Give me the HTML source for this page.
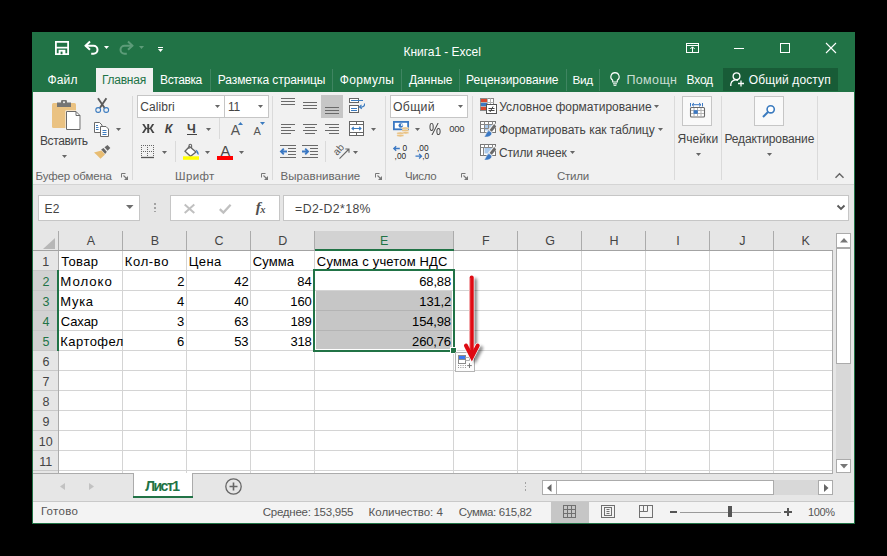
<!DOCTYPE html>
<html><head><meta charset="utf-8"><title>Excel</title>
<style>
html,body{margin:0;padding:0;background:#000;}
body{width:887px;height:556px;position:relative;overflow:hidden;font-family:"Liberation Sans",sans-serif;}
body>div,body>span,body>svg{position:absolute;}
span{white-space:nowrap;line-height:1;}
svg{overflow:visible;}
</style></head><body>
<div style="left:32px;top:32px;width:823px;height:492px;background:#e6e6e6;"></div>
<div style="left:32px;top:32px;width:823px;height:60px;background:#217346;"></div>
<div style="left:32px;top:91px;width:1px;height:433px;background:#217346;"></div>
<div style="left:854px;top:91px;width:1px;height:433px;background:#217346;"></div>
<div style="left:32px;top:523px;width:823px;height:1px;background:#217346;"></div>
<svg style="left:55px;top:41px" width="14" height="14" viewBox="0 0 14 14"><path d="M0.9 0.9H13.1V13.1H0.9Z" fill="none" stroke="#fff" stroke-width="1.8"/><rect x="1" y="5.8" width="12" height="1.7" fill="#fff"/><rect x="3.6" y="8.8" width="6.8" height="4.4" fill="#fff"/><rect x="5.6" y="10.6" width="1.9" height="2.6" fill="#217346"/></svg>
<svg style="left:84px;top:41px" width="15" height="14" viewBox="0 0 15 14"><path d="M1.5 4.7H9.5A4 4 0 0 1 9.5 12.7H7.2" fill="none" stroke="#fff" stroke-width="2"/><path d="M6 0.6L1.6 4.7L6 8.8" fill="none" stroke="#fff" stroke-width="2"/></svg>
<svg style="left:104.0px;top:45.7px" width="5" height="3" viewBox="0 0 5 3"><path d="M0 0H5L2.5 3Z" fill="#fff"/></svg>
<svg style="left:119px;top:41px" width="15" height="14" viewBox="0 0 15 14"><path d="M13.5 4.7H5.5A4 4 0 0 0 5.5 12.7H7.8" fill="none" stroke="#5d9c79" stroke-width="2"/><path d="M9 0.6L13.4 4.7L9 8.8" fill="none" stroke="#5d9c79" stroke-width="2"/></svg>
<svg style="left:139.0px;top:45.7px" width="5" height="3" viewBox="0 0 5 3"><path d="M0 0H5L2.5 3Z" fill="#5d9c79"/></svg>
<div style="left:158px;top:46.5px;width:5px;height:1px;background:#fff;"></div>
<svg style="left:158.0px;top:49.0px" width="5" height="3" viewBox="0 0 5 3"><path d="M0 0H5L2.5 3Z" fill="#fff"/></svg>
<span style="left:403.54px;top:46px;font-size:12px;color:#fff;letter-spacing:-0.040px;">Книга1 - Excel</span>
<svg style="left:686px;top:43px" width="13" height="10" viewBox="0 0 13 10"><rect x="0.5" y="0.5" width="12" height="9" fill="none" stroke="#fff"/><path d="M0.5 2.5H12.5M6.5 9.5V4M4.3 6L6.5 3.8L8.7 6" fill="none" stroke="#fff"/></svg>
<div style="left:734px;top:48px;width:10px;height:1px;background:#fff;"></div>
<svg style="left:780px;top:43px" width="10" height="10" viewBox="0 0 10 10"><rect x="0.5" y="0.5" width="9" height="9" fill="none" stroke="#fff"/></svg>
<svg style="left:826px;top:43px" width="10" height="10" viewBox="0 0 10 10"><path d="M0 0L10 10M10 0L0 10" stroke="#fff" stroke-width="1.1"/></svg>
<div style="left:96px;top:68px;width:57px;height:25px;background:#f1f1f1;"></div>
<span style="left:47.54px;top:74px;font-size:12px;color:#fff;letter-spacing:0.127px;">Файл</span>
<span style="left:101.94px;top:74px;font-size:12px;color:#217346;letter-spacing:-0.237px;">Главная</span>
<span style="left:160.04px;top:74px;font-size:12px;color:#fff;letter-spacing:-0.403px;">Вставка</span>
<span style="left:217.74px;top:74px;font-size:12px;color:#fff;letter-spacing:-0.069px;">Разметка страницы</span>
<span style="left:339.84px;top:74px;font-size:12px;color:#fff;letter-spacing:0.323px;">Формулы</span>
<span style="left:408.94px;top:74px;font-size:12px;color:#fff;letter-spacing:0.036px;">Данные</span>
<span style="left:466.04px;top:74px;font-size:12px;color:#fff;letter-spacing:-0.011px;">Рецензирование</span>
<span style="left:572.56px;top:74px;font-size:11.75px;color:#fff;letter-spacing:-0.396px;">Вид</span>
<span style="left:626.40px;top:74px;font-size:12.5px;color:#cbded3;letter-spacing:0.378px;">Помощн</span>
<span style="left:686.54px;top:74px;font-size:12px;color:#fff;letter-spacing:-0.193px;">Вход</span>
<div style="left:210px;top:69px;width:1px;height:22px;background:#3f8561;"></div>
<div style="left:332px;top:69px;width:1px;height:22px;background:#3f8561;"></div>
<div style="left:401px;top:69px;width:1px;height:22px;background:#3f8561;"></div>
<div style="left:459px;top:69px;width:1px;height:22px;background:#3f8561;"></div>
<div style="left:566px;top:69px;width:1px;height:22px;background:#3f8561;"></div>
<div style="left:599px;top:69px;width:1px;height:22px;background:#3f8561;"></div>
<svg style="left:610px;top:72px" width="10" height="14" viewBox="0 0 10 14"><path d="M5 0.6A4.2 4.2 0 0 1 7.3 8.3V10H2.7V8.3A4.2 4.2 0 0 1 5 0.6Z" fill="none" stroke="#fff" stroke-width="1.1"/><path d="M3 11.8H7M3.6 13.3H6.4" stroke="#fff" stroke-width="1"/></svg>
<div style="left:723px;top:68px;width:115px;height:23px;background:#185c37;"></div>
<svg style="left:730px;top:72px" width="15" height="15" viewBox="0 0 15 15"><circle cx="6.5" cy="4.2" r="3.4" fill="none" stroke="#fff" stroke-width="1.3"/><path d="M0.8 14V12A5 5 0 0 1 8 8.5" fill="none" stroke="#fff" stroke-width="1.3"/><path d="M11 8.5V14.5M8 11.5H14" stroke="#fff" stroke-width="1.3"/></svg>
<span style="left:748.86px;top:74px;font-size:12px;color:#fff;letter-spacing:0.113px;">Общий доступ</span>
<div style="left:33px;top:92px;width:821px;height:92px;background:#f1f1f1;"></div>
<div style="left:33px;top:184px;width:821px;height:1px;background:#d4d4d4;"></div>
<div style="left:132px;top:96px;width:1px;height:84px;background:#dadada;"></div>
<div style="left:272px;top:96px;width:1px;height:84px;background:#dadada;"></div>
<div style="left:385px;top:96px;width:1px;height:84px;background:#dadada;"></div>
<div style="left:472px;top:96px;width:1px;height:84px;background:#dadada;"></div>
<div style="left:674px;top:96px;width:1px;height:84px;background:#dadada;"></div>
<div style="left:721px;top:96px;width:1px;height:84px;background:#dadada;"></div>
<div style="left:817px;top:96px;width:1px;height:84px;background:#dadada;"></div>
<svg style="left:52px;top:100px" width="29" height="30" viewBox="0 0 29 30"><rect x="0" y="3" width="24" height="25" rx="1.5" fill="#eac282"/><rect x="5" y="2.5" width="14" height="4.5" fill="#757575"/><rect x="9" y="0" width="6" height="4" rx="1.2" fill="#757575"/><circle cx="12" cy="2.3" r="1" fill="#f1f1f1"/><path d="M13.5 10.5H24L28.8 15V30H13.5Z" fill="#fff"/><path d="M14.5 11.5H24L28 15.5V29.5H14.5Z" fill="#fff" stroke="#6a6a6a" stroke-width="1"/><path d="M24 11.5V15.5H28" fill="none" stroke="#6a6a6a" stroke-width="1"/></svg>
<span style="left:39.94px;top:135px;font-size:12px;color:#444;letter-spacing:-0.391px;">Вставить</span>
<svg style="left:62.0px;top:154.8px" width="5" height="3" viewBox="0 0 5 3"><path d="M0 0H5L2.5 3Z" fill="#666"/></svg>
<svg style="left:95px;top:98px" width="15" height="15" viewBox="0 0 15 15"><path d="M3 0.3L9.6 10M11.4 0.3L4.8 10" stroke="#5a5a5a" stroke-width="1.9" fill="none"/><circle cx="3.2" cy="12" r="2.4" fill="#f1f1f1" stroke="#3b7bbf" stroke-width="1.1"/><circle cx="11.2" cy="12" r="2.4" fill="#f1f1f1" stroke="#3b7bbf" stroke-width="1.1"/></svg>
<svg style="left:94px;top:122px" width="16" height="15" viewBox="0 0 16 15"><path d="M0.5 0.5H5.5L8 3V10.5H0.5Z" fill="#fff" stroke="#6a6a6a"/><path d="M6.5 4.5H12L14.5 7V14.5H6.5Z" fill="#fff" stroke="#6a6a6a"/><path d="M8.5 8.5H12.5M8.5 10.5H12.5M8.5 12.5H12.5" stroke="#3b7bbf" stroke-width="1"/><path d="M2 3.5H4M2 5.5H4.5M2 7.5H4.5" stroke="#3b7bbf" stroke-width="1"/></svg>
<svg style="left:116.1px;top:128.0px" width="5" height="3" viewBox="0 0 5 3"><path d="M0 0H5L2.5 3Z" fill="#666"/></svg>
<svg style="left:94px;top:145px" width="17" height="14" viewBox="0 0 17 14"><path d="M0 7.5L7.5 5.5L11 9.5L6.5 13.8Q3 10 0 7.5Z" fill="#e8bd73"/><path d="M7.2 4.6L9.5 3L12.8 6.8L11.2 9Z" fill="#666"/><path d="M10.5 2.3L13.5 0L16.3 3L13.6 5.8Z" fill="#666"/></svg>
<span style="left:35.58px;top:171px;font-size:11.5px;color:#666;letter-spacing:-0.157px;">Буфер обмена</span>
<svg style="left:121px;top:172.5px" width="7" height="7" viewBox="0 0 7 7"><path d="M0.5 4.5V0.5H4.5" fill="none" stroke="#777" stroke-width="1"/><path d="M2.5 2.5L5.5 5.5" stroke="#777" stroke-width="1.1"/><path d="M7 3V7H3Z" fill="#777"/></svg>
<div style="left:137px;top:95px;width:88px;height:23px;background:#fff;border:1px solid #c6c6c6;box-sizing:border-box;"></div>
<div style="left:224px;top:95px;width:45px;height:23px;background:#fff;border:1px solid #c6c6c6;box-sizing:border-box;"></div>
<span style="left:140.20px;top:101px;font-size:12px;color:#444;letter-spacing:0.070px;">Calibri</span>
<svg style="left:215.0px;top:104.8px" width="5" height="3" viewBox="0 0 5 3"><path d="M0 0H5L2.5 3Z" fill="#666"/></svg>
<span style="left:228.10px;top:101px;font-size:12.0px;color:#444;letter-spacing:-0.480px;">11</span>
<svg style="left:257.8px;top:104.8px" width="5" height="3" viewBox="0 0 5 3"><path d="M0 0H5L2.5 3Z" fill="#666"/></svg>
<span style="left:141.70px;top:123px;font-size:12.5px;color:#444;font-weight:bold;transform:scaleX(1.1);transform-origin:0 0;">Ж</span>
<span style="left:164.75px;top:123px;font-size:12.5px;color:#444;font-weight:bold;font-style:italic;">К</span>
<span style="left:186.91px;top:123px;font-size:12.5px;color:#444;font-weight:bold;">Ч</span>
<div style="left:187.2px;top:134px;width:10px;height:1.2px;background:#444;"></div>
<svg style="left:206.0px;top:127.80000000000001px" width="5" height="3" viewBox="0 0 5 3"><path d="M0 0H5L2.5 3Z" fill="#666"/></svg>
<div style="left:219px;top:118px;width:1px;height:21px;background:#dadada;"></div>
<span style="left:230.70px;top:123px;font-size:14px;color:#555;">A</span>
<svg style="left:238px;top:122px" width="5" height="3" viewBox="0 0 5 3"><path d="M0 3H5L2.5 0Z" fill="#3b7bbf"/></svg>
<span style="left:253.60px;top:126px;font-size:11px;color:#555;">A</span>
<svg style="left:260.3px;top:122px" width="5" height="3" viewBox="0 0 5 3"><path d="M0 0H5L2.5 3Z" fill="#3b7bbf"/></svg>
<svg style="left:141px;top:145px" width="13" height="13" viewBox="0 0 13 13"><path d="M0 0.5H13M0 6.5H13M0.5 0V12M6.5 0V12M12.5 0V12" stroke="#666" stroke-width="1" stroke-dasharray="1 1" fill="none" shape-rendering="crispEdges"/><path d="M0 12.5H13" stroke="#555" stroke-width="1.3"/></svg>
<svg style="left:161.8px;top:150.8px" width="5" height="3" viewBox="0 0 5 3"><path d="M0 0H5L2.5 3Z" fill="#666"/></svg>
<div style="left:175px;top:141px;width:1px;height:21px;background:#dadada;"></div>
<svg style="left:183px;top:144px" width="17" height="16" viewBox="0 0 17 16"><path d="M6.5 2.5L13 8L7.5 12.3L2 7.2Z" fill="#fff" stroke="#666" stroke-width="1.3"/><path d="M6 5V1.5A1.3 1.3 0 0 1 8.6 1.5V4" fill="none" stroke="#666" stroke-width="1.1"/><path d="M12.6 5.5C15 6.5 16.2 9 15.5 11C14 10.5 13.8 8 12.6 5.5Z" fill="#3b7bbf"/><rect x="0" y="12.3" width="16" height="3.5" fill="#ffff00"/></svg>
<svg style="left:205.1px;top:150.8px" width="5" height="3" viewBox="0 0 5 3"><path d="M0 0H5L2.5 3Z" fill="#666"/></svg>
<span style="left:220.50px;top:144px;font-size:14.5px;color:#484848;">A</span>
<div style="left:217px;top:156.3px;width:16px;height:3.5px;background:#ff0000;"></div>
<svg style="left:239.0px;top:150.8px" width="5" height="3" viewBox="0 0 5 3"><path d="M0 0H5L2.5 3Z" fill="#666"/></svg>
<span style="left:175.08px;top:171px;font-size:11.5px;color:#666;letter-spacing:0.329px;">Шрифт</span>
<svg style="left:261px;top:172.5px" width="7" height="7" viewBox="0 0 7 7"><path d="M0.5 4.5V0.5H4.5" fill="none" stroke="#777" stroke-width="1"/><path d="M2.5 2.5L5.5 5.5" stroke="#777" stroke-width="1.1"/><path d="M7 3V7H3Z" fill="#777"/></svg>
<div style="left:281px;top:98px;width:14px;height:1px;background:#6a6a6a;"></div>
<div style="left:281px;top:101px;width:14px;height:1px;background:#6a6a6a;"></div>
<div style="left:281px;top:104px;width:14px;height:1px;background:#6a6a6a;"></div>
<div style="left:303px;top:102px;width:14px;height:1px;background:#6a6a6a;"></div>
<div style="left:303px;top:105px;width:14px;height:1px;background:#6a6a6a;"></div>
<div style="left:303px;top:108px;width:14px;height:1px;background:#6a6a6a;"></div>
<div style="left:321px;top:95px;width:22px;height:23px;background:#c6c6c6;"></div>
<div style="left:325px;top:107px;width:14px;height:1px;background:#6a6a6a;"></div>
<div style="left:325px;top:110px;width:14px;height:1px;background:#6a6a6a;"></div>
<div style="left:325px;top:113px;width:14px;height:1px;background:#6a6a6a;"></div>
<svg style="left:349px;top:98px" width="17" height="15" viewBox="0 0 17 15"><rect x="0.5" y="0.5" width="9" height="4" fill="#fff" stroke="#666"/><path d="M2 2.5H14" stroke="#3b7bbf"/><rect x="0.5" y="7.5" width="9" height="7" fill="#fff" stroke="#666"/><path d="M2 10.5H8M2 12.5H8" stroke="#3b7bbf"/><path d="M15.5 5.5C16 8.5 13.5 9.5 10.5 9M12.5 6.8L10.3 9L12.8 10.8" fill="none" stroke="#3b7bbf" stroke-width="1.1"/></svg>
<div style="left:281px;top:124px;width:14px;height:1px;background:#6a6a6a;"></div>
<div style="left:303.0px;top:124px;width:14px;height:1px;background:#6a6a6a;"></div>
<div style="left:325px;top:124px;width:14px;height:1px;background:#6a6a6a;"></div>
<div style="left:281px;top:127px;width:10px;height:1px;background:#6a6a6a;"></div>
<div style="left:305.0px;top:127px;width:10px;height:1px;background:#6a6a6a;"></div>
<div style="left:329px;top:127px;width:10px;height:1px;background:#6a6a6a;"></div>
<div style="left:281px;top:130px;width:14px;height:1px;background:#6a6a6a;"></div>
<div style="left:303.0px;top:130px;width:14px;height:1px;background:#6a6a6a;"></div>
<div style="left:325px;top:130px;width:14px;height:1px;background:#6a6a6a;"></div>
<div style="left:281px;top:133px;width:10px;height:1px;background:#6a6a6a;"></div>
<div style="left:305.0px;top:133px;width:10px;height:1px;background:#6a6a6a;"></div>
<div style="left:329px;top:133px;width:10px;height:1px;background:#6a6a6a;"></div>
<svg style="left:349px;top:121px" width="15" height="15" viewBox="0 0 15 15"><rect x="0.5" y="0.5" width="14" height="14" fill="#fff" stroke="#666"/><path d="M0.5 3.5H14.5M0.5 11.5H14.5M7.5 0.5V3.5M7.5 11.5V14.5" stroke="#666" fill="none"/><path d="M3 7.5H12M4.8 5.8L3 7.5L4.8 9.2M10.2 5.8L12 7.5L10.2 9.2" stroke="#3b7bbf" stroke-width="1.1" fill="none"/></svg>
<svg style="left:371.1px;top:128.0px" width="5" height="3" viewBox="0 0 5 3"><path d="M0 0H5L2.5 3Z" fill="#666"/></svg>
<svg style="left:280px;top:145px" width="16" height="13" viewBox="0 0 16 13"><path d="M0 0.5H16M8 3.5H16M8 6.5H16M8 9.5H16M0 12.5H16" stroke="#6a6a6a" fill="none"/><path d="M7 6.5H1M3.8 3.6L0.9 6.5L3.8 9.4" stroke="#3b78c3" stroke-width="1.8" fill="none"/></svg>
<svg style="left:302px;top:145px" width="16" height="13" viewBox="0 0 16 13"><path d="M0 0.5H16M8 3.5H16M8 6.5H16M8 9.5H16M0 12.5H16" stroke="#6a6a6a" fill="none"/><path d="M0 6.5H6M3.2 3.6L6.1 6.5L3.2 9.4" stroke="#3b78c3" stroke-width="1.8" fill="none"/></svg>
<div style="left:325px;top:141px;width:1px;height:21px;background:#dadada;"></div>
<svg style="left:333px;top:144px" width="17" height="16" viewBox="0 0 17 16"><text x="0" y="0" font-size="10" fill="#555" transform="translate(4.3,12) rotate(-48)" font-family="Liberation Sans">ab</text><path d="M6.5 14.7L15.5 5.5M12.3 5H16V8.7" stroke="#666" stroke-width="1.1" fill="none"/></svg>
<svg style="left:353.0px;top:150.8px" width="5" height="3" viewBox="0 0 5 3"><path d="M0 0H5L2.5 3Z" fill="#666"/></svg>
<span style="left:280.58px;top:171px;font-size:11.5px;color:#666;letter-spacing:0.047px;">Выравнивание</span>
<svg style="left:374.5px;top:172.5px" width="7" height="7" viewBox="0 0 7 7"><path d="M0.5 4.5V0.5H4.5" fill="none" stroke="#777" stroke-width="1"/><path d="M2.5 2.5L5.5 5.5" stroke="#777" stroke-width="1.1"/><path d="M7 3V7H3Z" fill="#777"/></svg>
<div style="left:390px;top:95px;width:78px;height:23px;background:#fff;border:1px solid #c6c6c6;box-sizing:border-box;"></div>
<span style="left:392.95px;top:101px;font-size:12.25px;color:#444;letter-spacing:0.352px;">Общий</span>
<svg style="left:457.8px;top:104.8px" width="5" height="3" viewBox="0 0 5 3"><path d="M0 0H5L2.5 3Z" fill="#666"/></svg>
<svg style="left:393px;top:121px" width="16" height="16" viewBox="0 0 16 16"><rect x="0.9" y="0.9" width="14.2" height="7.4" fill="#fff" stroke="#3b78c3" stroke-width="1.8"/><circle cx="7.8" cy="4.5" r="2.3" fill="#3b78c3"/><circle cx="8.8" cy="4" r="0.9" fill="#fff"/><ellipse cx="12.3" cy="7.3" rx="3.6" ry="1.3" fill="#eac282" stroke="#f1f1f1" stroke-width="0.5"/><ellipse cx="12.3" cy="9.5" rx="3.6" ry="1.3" fill="#eac282" stroke="#f1f1f1" stroke-width="0.5"/><ellipse cx="12.3" cy="11.7" rx="3.6" ry="1.3" fill="#eac282" stroke="#f1f1f1" stroke-width="0.5"/><ellipse cx="7.3" cy="12.3" rx="3.6" ry="1.3" fill="#eac282" stroke="#f1f1f1" stroke-width="0.5"/><ellipse cx="7.3" cy="14.6" rx="3.6" ry="1.3" fill="#eac282" stroke="#f1f1f1" stroke-width="0.5"/></svg>
<svg style="left:414.9px;top:128.0px" width="5" height="3" viewBox="0 0 5 3"><path d="M0 0H5L2.5 3Z" fill="#666"/></svg>
<span style="left:429.14px;top:122px;font-size:16px;color:#444;transform:scaleX(0.85);transform-origin:0 0;">%</span>
<span style="left:449.32px;top:124px;font-size:9.5px;color:#3a3a3a;letter-spacing:-0.302px;">000</span>
<svg style="left:393px;top:145px" width="16" height="14" viewBox="0 0 16 14"><path d="M6.8 3.5H0.8M3.2 1.2L0.8 3.5L3.2 5.8" stroke="#3b78c3" stroke-width="1.3" fill="none"/><text x="9.5" y="5.6" font-size="8.3" fill="#2a2a2a" font-family="Liberation Sans">0</text><text x="1.6" y="13.9" font-size="8.3" fill="#2a2a2a" font-family="Liberation Sans">,00</text></svg>
<svg style="left:414.5px;top:145px" width="16" height="14" viewBox="0 0 16 14"><text x="2" y="5.6" font-size="8.3" fill="#2a2a2a" font-family="Liberation Sans">,00</text><path d="M0.5 11.2H6.5M4.1 8.9L6.5 11.2L4.1 13.5" stroke="#3b78c3" stroke-width="1.3" fill="none"/><text x="7.2" y="13.9" font-size="8.3" fill="#2a2a2a" font-family="Liberation Sans">,0</text></svg>
<span style="left:404.88px;top:171px;font-size:11.5px;color:#666;letter-spacing:-0.296px;">Число</span>
<svg style="left:461px;top:172.5px" width="7" height="7" viewBox="0 0 7 7"><path d="M0.5 4.5V0.5H4.5" fill="none" stroke="#777" stroke-width="1"/><path d="M2.5 2.5L5.5 5.5" stroke="#777" stroke-width="1.1"/><path d="M7 3V7H3Z" fill="#777"/></svg>
<svg style="left:480px;top:98px" width="17" height="16" viewBox="0 0 17 16"><rect x="0.5" y="0.5" width="13" height="12" fill="#fff" stroke="#8a8a8a"/><path d="M7.5 0.5V12M10.5 0.5V6M0.5 4.5H13.5M0.5 8.5H8" stroke="#b5b5b5" fill="none"/><rect x="1" y="1" width="6" height="3" fill="#d8492f"/><rect x="1" y="5" width="6" height="3" fill="#3b78c3"/><rect x="1" y="9" width="6" height="3" fill="#d8492f"/><rect x="6.5" y="6.5" width="10" height="9" fill="#fff" stroke="#555"/><path d="M8.5 10.5H14.5M8.5 12.5H14.5M13 8.5L10 14" stroke="#444" stroke-width="1"/></svg>
<span style="left:499.24px;top:101px;font-size:12px;color:#444;letter-spacing:-0.015px;">Условное форматирование</span>
<svg style="left:654.0px;top:104.8px" width="5" height="3" viewBox="0 0 5 3"><path d="M0 0H5L2.5 3Z" fill="#666"/></svg>
<svg style="left:480px;top:121px" width="17" height="17" viewBox="0 0 17 17"><rect x="0.5" y="0.5" width="15" height="11" fill="#fff" stroke="#777"/><rect x="4.5" y="3.5" width="8" height="6" fill="#abc9ea"/><path d="M0.5 3.5H15.5M0.5 7.5H10M0.5 11.5H7M4.5 0.5V11.5M8.5 0.5V10M12.5 0.5V5" stroke="#888" fill="none"/><path d="M8 8.5L14.5 1.5L17 4.5L11.5 12.5Z" fill="#f1f1f1"/><path d="M14.2 3L16.2 5.5L11.8 10.8L9.6 9Z" fill="#6a6a6a"/><path d="M9 9.6L11.6 11.6C12.5 14.5 8.5 16.8 4 15.9C6.2 14.5 6 10.6 9 9.6Z" fill="#3b78c3" stroke="#f1f1f1" stroke-width="0.6"/></svg>
<span style="left:498.94px;top:124px;font-size:12px;color:#444;letter-spacing:-0.015px;">Форматировать как таблицу</span>
<svg style="left:658.1px;top:128.0px" width="5" height="3" viewBox="0 0 5 3"><path d="M0 0H5L2.5 3Z" fill="#666"/></svg>
<svg style="left:480px;top:144px" width="17" height="17" viewBox="0 0 17 17"><rect x="0.5" y="0.5" width="15" height="11" fill="#fff" stroke="#777"/><rect x="4.5" y="3.5" width="8" height="6" fill="#abc9ea"/><path d="M0.5 3.5H15.5M4.5 0.5V3.5M8.5 0.5V3.5M12.5 0.5V3.5M3.5 3.5V11.5" stroke="#888" fill="none"/><path d="M8 8.5L14.5 1.5L17 4.5L11.5 12.5Z" fill="#f1f1f1"/><path d="M14.2 3L16.2 5.5L11.8 10.8L9.6 9Z" fill="#6a6a6a"/><path d="M9 9.6L11.6 11.6C12.5 14.5 8.5 16.8 4 15.9C6.2 14.5 6 10.6 9 9.6Z" fill="#3b78c3" stroke="#f1f1f1" stroke-width="0.6"/></svg>
<span style="left:499.00px;top:147px;font-size:12px;color:#444;letter-spacing:-0.160px;">Стили ячеек</span>
<svg style="left:569.8px;top:150.8px" width="5" height="3" viewBox="0 0 5 3"><path d="M0 0H5L2.5 3Z" fill="#666"/></svg>
<span style="left:557.02px;top:171px;font-size:11.5px;color:#666;letter-spacing:-0.235px;">Стили</span>
<div style="left:682px;top:96px;width:30px;height:30px;background:#f9f9f9;border:1px solid #c6c6c6;box-sizing:border-box;"></div>
<svg style="left:690px;top:102px" width="15" height="16" viewBox="0 0 15 16"><path d="M0.5 1V4.5M12.5 1V4.5M2 2.7H11M4 1L2 2.7L4 4.4M9 1L11 2.7L9 4.4" stroke="#3b78c3" fill="none"/><rect x="0.5" y="5.5" width="14" height="9.5" rx="1" fill="#fff" stroke="#686868" stroke-width="1.1"/><path d="M1 8.5H14M1 11.5H14M4 6V14.5M7.5 6V14.5M11 6V14.5" stroke="#b4b4b4" fill="none"/><rect x="3.6" y="8.2" width="4.2" height="3.6" fill="#3b78c3"/></svg>
<span style="left:677.40px;top:133px;font-size:12px;color:#444;letter-spacing:0.096px;">Ячейки</span>
<svg style="left:695.9px;top:153.0px" width="5" height="3" viewBox="0 0 5 3"><path d="M0 0H5L2.5 3Z" fill="#666"/></svg>
<div style="left:754px;top:96px;width:30px;height:30px;background:#f9f9f9;border:1px solid #c6c6c6;box-sizing:border-box;"></div>
<svg style="left:762px;top:104px" width="14" height="14" viewBox="0 0 14 14"><circle cx="8.7" cy="5.3" r="3.6" fill="#fff" stroke="#3b7bbf" stroke-width="1.6"/><path d="M6 8L1 13" stroke="#3b7bbf" stroke-width="2"/></svg>
<span style="left:724.44px;top:133px;font-size:12px;color:#444;letter-spacing:-0.114px;">Редактирование</span>
<svg style="left:766.7px;top:153.0px" width="5" height="3" viewBox="0 0 5 3"><path d="M0 0H5L2.5 3Z" fill="#666"/></svg>
<svg style="left:835px;top:173px" width="9" height="5" viewBox="0 0 9 5"><path d="M0.5 4.7L4.5 0.8L8.5 4.7" fill="none" stroke="#666" stroke-width="1.5"/></svg>
<div style="left:38px;top:195px;width:102px;height:26px;background:#fff;border:1px solid #c6c6c6;box-sizing:border-box;"></div>
<span style="left:44.54px;top:203px;font-size:12px;color:#444;letter-spacing:0.120px;">E2</span>
<svg style="left:125.65px;top:205.2px" width="7.5" height="4" viewBox="0 0 7.5 4"><path d="M0 0H7.5L3.75 4Z" fill="#6e6e6e"/></svg>
<div style="left:154px;top:203.3px;width:1.8px;height:1.8px;background:#a2a2a2;"></div>
<div style="left:154px;top:207px;width:1.8px;height:1.8px;background:#a2a2a2;"></div>
<div style="left:154px;top:210.7px;width:1.8px;height:1.8px;background:#a2a2a2;"></div>
<div style="left:170px;top:195px;width:110px;height:26px;background:#fff;border:1px solid #c6c6c6;box-sizing:border-box;"></div>
<svg style="left:183.5px;top:203.5px" width="11" height="9.5" viewBox="0 0 11 9.5"><path d="M0.7 0.5L10.3 9M10.3 0.5L0.7 9" stroke="#c0c0c0" stroke-width="2"/></svg>
<svg style="left:219.4px;top:203.5px" width="12.5" height="9.5" viewBox="0 0 12.5 9.5"><path d="M0.8 5.2L4.4 8.6L11.6 0.8" fill="none" stroke="#c0c0c0" stroke-width="2.3"/></svg>
<span style="left:255.8px;top:199px;font-family:'Liberation Serif',serif;font-style:italic;font-weight:bold;font-size:15.5px;color:#505050;letter-spacing:-0.8px">f<span style="font-size:10.5px;position:relative;top:0.5px;font-weight:bold">x</span></span>
<div style="left:283px;top:195px;width:566px;height:26px;background:#fff;border:1px solid #c6c6c6;box-sizing:border-box;"></div>
<span style="left:295.09px;top:203px;font-size:12.25px;color:#444;letter-spacing:0.399px;">=D2-D2*18%</span>
<svg style="left:837px;top:205px" width="8" height="5" viewBox="0 0 8 5"><path d="M0.5 0.5L4 4L7.5 0.5" fill="none" stroke="#5a5a5a" stroke-width="1.9"/></svg>
<div style="left:59px;top:251px;width:774px;height:222px;background:#fff;"></div>
<div style="left:315px;top:231px;width:139px;height:19px;background:#d2d2d2;"></div>
<div style="left:122px;top:231px;width:1px;height:19px;background:#ababab;"></div>
<div style="left:186px;top:231px;width:1px;height:19px;background:#ababab;"></div>
<div style="left:250px;top:231px;width:1px;height:19px;background:#ababab;"></div>
<div style="left:314px;top:231px;width:1px;height:19px;background:#ababab;"></div>
<div style="left:453px;top:231px;width:1px;height:19px;background:#ababab;"></div>
<div style="left:517px;top:231px;width:1px;height:19px;background:#ababab;"></div>
<div style="left:581px;top:231px;width:1px;height:19px;background:#ababab;"></div>
<div style="left:645px;top:231px;width:1px;height:19px;background:#ababab;"></div>
<div style="left:709px;top:231px;width:1px;height:19px;background:#ababab;"></div>
<div style="left:773px;top:231px;width:1px;height:19px;background:#ababab;"></div>
<div style="left:58px;top:231px;width:1px;height:19px;background:#ababab;"></div>
<div style="left:33px;top:250px;width:800px;height:1px;background:#a3a3a3;"></div>
<div style="left:315px;top:249px;width:139px;height:2px;background:#217346;"></div>
<span style="left:86.84px;top:235px;font-size:12.5px;color:#444;">A</span>
<span style="left:150.66px;top:235px;font-size:12.5px;color:#444;">B</span>
<span style="left:214.41px;top:235px;font-size:12.5px;color:#444;">C</span>
<span style="left:278.28px;top:235px;font-size:12.5px;color:#444;">D</span>
<span style="left:380.09px;top:235px;font-size:12.5px;color:#217346;">E</span>
<span style="left:481.94px;top:235px;font-size:12.5px;color:#444;">F</span>
<span style="left:545.28px;top:235px;font-size:12.5px;color:#444;">G</span>
<span style="left:609.50px;top:235px;font-size:12.5px;color:#444;">H</span>
<span style="left:676.28px;top:235px;font-size:12.5px;color:#444;">I</span>
<span style="left:739.25px;top:235px;font-size:12.5px;color:#444;">J</span>
<span style="left:801.41px;top:235px;font-size:12.5px;color:#444;">K</span>
<svg style="left:43px;top:238px" width="12" height="11" viewBox="0 0 12 11"><path d="M12 0V11H0Z" fill="#b7b7b7"/></svg>
<div style="left:33px;top:271px;width:25px;height:80px;background:#d2d2d2;"></div>
<div style="left:33px;top:270px;width:25px;height:1px;background:#c8c8c8;"></div>
<div style="left:59px;top:270px;width:774px;height:1px;background:#d4d4d4;"></div>
<span style="left:42.34px;top:256px;font-size:12.5px;color:#444;">1</span>
<div style="left:33px;top:290px;width:25px;height:1px;background:#c8c8c8;"></div>
<div style="left:59px;top:290px;width:774px;height:1px;background:#d4d4d4;"></div>
<span style="left:42.53px;top:276px;font-size:12.5px;color:#217346;">2</span>
<div style="left:33px;top:310px;width:25px;height:1px;background:#c8c8c8;"></div>
<div style="left:59px;top:310px;width:774px;height:1px;background:#d4d4d4;"></div>
<span style="left:42.53px;top:296px;font-size:12.5px;color:#217346;">3</span>
<div style="left:33px;top:330px;width:25px;height:1px;background:#c8c8c8;"></div>
<div style="left:59px;top:330px;width:774px;height:1px;background:#d4d4d4;"></div>
<span style="left:42.59px;top:316px;font-size:12.5px;color:#217346;">4</span>
<div style="left:33px;top:350px;width:25px;height:1px;background:#c8c8c8;"></div>
<div style="left:59px;top:350px;width:774px;height:1px;background:#d4d4d4;"></div>
<span style="left:42.53px;top:336px;font-size:12.5px;color:#217346;">5</span>
<div style="left:33px;top:370px;width:25px;height:1px;background:#c8c8c8;"></div>
<div style="left:59px;top:370px;width:774px;height:1px;background:#d4d4d4;"></div>
<span style="left:42.47px;top:356px;font-size:12.5px;color:#444;">6</span>
<div style="left:33px;top:390px;width:25px;height:1px;background:#c8c8c8;"></div>
<div style="left:59px;top:390px;width:774px;height:1px;background:#d4d4d4;"></div>
<span style="left:42.53px;top:376px;font-size:12.5px;color:#444;">7</span>
<div style="left:33px;top:410px;width:25px;height:1px;background:#c8c8c8;"></div>
<div style="left:59px;top:410px;width:774px;height:1px;background:#d4d4d4;"></div>
<span style="left:42.50px;top:396px;font-size:12.5px;color:#444;">8</span>
<div style="left:33px;top:430px;width:25px;height:1px;background:#c8c8c8;"></div>
<div style="left:59px;top:430px;width:774px;height:1px;background:#d4d4d4;"></div>
<span style="left:42.53px;top:416px;font-size:12.5px;color:#444;">9</span>
<div style="left:33px;top:450px;width:25px;height:1px;background:#c8c8c8;"></div>
<div style="left:59px;top:450px;width:774px;height:1px;background:#d4d4d4;"></div>
<span style="left:38.81px;top:436px;font-size:12.5px;color:#444;">10</span>
<div style="left:33px;top:470px;width:25px;height:1px;background:#c8c8c8;"></div>
<div style="left:59px;top:470px;width:774px;height:1px;background:#d4d4d4;"></div>
<span style="left:39.34px;top:456px;font-size:12.5px;color:#444;">11</span>
<div style="left:58px;top:251px;width:1px;height:222px;background:#ababab;"></div>
<div style="left:57px;top:270px;width:2px;height:81px;background:#217346;"></div>
<div style="left:122px;top:251px;width:1px;height:222px;background:#d4d4d4;"></div>
<div style="left:186px;top:251px;width:1px;height:222px;background:#d4d4d4;"></div>
<div style="left:250px;top:251px;width:1px;height:222px;background:#d4d4d4;"></div>
<div style="left:314px;top:251px;width:1px;height:222px;background:#d4d4d4;"></div>
<div style="left:453px;top:251px;width:1px;height:222px;background:#d4d4d4;"></div>
<div style="left:517px;top:251px;width:1px;height:222px;background:#d4d4d4;"></div>
<div style="left:581px;top:251px;width:1px;height:222px;background:#d4d4d4;"></div>
<div style="left:645px;top:251px;width:1px;height:222px;background:#d4d4d4;"></div>
<div style="left:709px;top:251px;width:1px;height:222px;background:#d4d4d4;"></div>
<div style="left:773px;top:251px;width:1px;height:222px;background:#d4d4d4;"></div>
<div style="left:832px;top:251px;width:1px;height:223px;background:#ababab;"></div>
<div style="left:316px;top:291px;width:136px;height:58px;background:#c6c6c6;"></div>
<div style="left:316px;top:310px;width:136px;height:1px;background:#b4b4b4;"></div>
<div style="left:316px;top:330px;width:136px;height:1px;background:#b4b4b4;"></div>
<div style="left:313px;top:269px;width:142px;height:83px;border:2px solid #217346;box-sizing:border-box;"></div>
<div style="left:450px;top:347px;width:7px;height:7px;background:#fff;"></div>
<div style="left:451px;top:348px;width:5px;height:5px;background:#217346;"></div>
<span style="left:61.14px;top:255px;font-size:13px;color:#000;letter-spacing:0.380px;">Товар</span>
<span style="left:124.86px;top:255px;font-size:13px;color:#000;letter-spacing:0.626px;">Кол-во</span>
<span style="left:188.76px;top:255px;font-size:13px;color:#000;letter-spacing:0.392px;">Цена</span>
<span style="left:252.75px;top:255px;font-size:13px;color:#000;letter-spacing:0.082px;">Сумма</span>
<span style="left:316.85px;top:255px;font-size:13px;color:#000;letter-spacing:0.166px;">Сумма с учетом НДС</span>
<span style="left:60.34px;top:275px;font-size:13.25px;color:#000;letter-spacing:0.930px;">Молоко</span>
<span style="left:177.24px;top:275px;font-size:13px;color:#000;letter-spacing:-0.15px;">2</span>
<span style="left:234.37px;top:275px;font-size:13px;color:#000;letter-spacing:-0.15px;">42</span>
<span style="left:297.31px;top:275px;font-size:13px;color:#000;letter-spacing:-0.15px;">84</span>
<span style="left:419.22px;top:275px;font-size:13px;color:#000;letter-spacing:-0.15px;">68,88</span>
<span style="left:60.36px;top:295px;font-size:13px;color:#000;letter-spacing:0.687px;">Мука</span>
<span style="left:176.98px;top:295px;font-size:13px;color:#000;letter-spacing:-0.15px;">4</span>
<span style="left:234.18px;top:295px;font-size:13px;color:#000;letter-spacing:-0.15px;">40</span>
<span style="left:290.31px;top:295px;font-size:13px;color:#000;letter-spacing:-0.15px;">160</span>
<span style="left:419.35px;top:295px;font-size:13px;color:#000;letter-spacing:-0.15px;">131,2</span>
<span style="left:60.75px;top:315px;font-size:13px;color:#000;letter-spacing:-0.075px;">Сахар</span>
<span style="left:177.10px;top:315px;font-size:13px;color:#000;letter-spacing:-0.15px;">3</span>
<span style="left:234.24px;top:315px;font-size:13px;color:#000;letter-spacing:-0.15px;">63</span>
<span style="left:290.44px;top:315px;font-size:13px;color:#000;letter-spacing:-0.15px;">189</span>
<span style="left:412.09px;top:315px;font-size:13px;color:#000;letter-spacing:-0.15px;">154,98</span>
<span style="left:60.36px;top:335px;font-size:13px;color:#000;letter-spacing:0.441px;">Картофел</span>
<span style="left:177.11px;top:335px;font-size:13px;color:#000;letter-spacing:-0.15px;">6</span>
<span style="left:234.24px;top:335px;font-size:13px;color:#000;letter-spacing:-0.15px;">53</span>
<span style="left:290.38px;top:335px;font-size:13px;color:#000;letter-spacing:-0.15px;">318</span>
<span style="left:412.09px;top:335px;font-size:13px;color:#000;letter-spacing:-0.15px;">260,76</span>
<div style="left:836px;top:233px;width:15px;height:15px;background:#fff;border:1px solid #ababab;box-sizing:border-box;"></div>
<svg style="left:839.5px;top:238px" width="8" height="4.5" viewBox="0 0 8 4.5"><path d="M0 4.5H8L4 0Z" fill="#777"/></svg>
<div style="left:836px;top:248px;width:15px;height:211px;background:#d8d8d8;"></div>
<div style="left:836px;top:248px;width:15px;height:116px;background:#fff;border:1px solid #ababab;box-sizing:border-box;"></div>
<div style="left:836px;top:459px;width:15px;height:14px;background:#fff;border:1px solid #ababab;box-sizing:border-box;"></div>
<svg style="left:839.5px;top:464px" width="8" height="4.5" viewBox="0 0 8 4.5"><path d="M0 0H8L4 4.5Z" fill="#777"/></svg>
<div style="left:455px;top:352px;width:20px;height:20px;background:#fcfcfc;border:1px solid #b4b4b4;box-sizing:border-box;"></div>
<svg style="left:458px;top:355px" width="14" height="14" viewBox="0 0 14 14"><rect x="0.5" y="0.5" width="7" height="8" fill="#fff" stroke="#8a8a8a"/><rect x="1" y="1" width="6" height="3" fill="#3b78f0"/><path d="M1 4.5H7" stroke="#8a8a8a"/><path d="M7.5 2.5H11.5V5.5H7.5" stroke="#b0b0b0" fill="none"/><path d="M0 10.5H8M0 12.5H8" stroke="#999" stroke-dasharray="1 1.33"/><path d="M11.5 8.3V13M9.2 10.6H13.8" stroke="#777" stroke-width="1"/></svg>
<svg style="left:460px;top:270px" width="30" height="95" viewBox="0 0 30 95"><defs><filter id="sh" x="-80%" y="-10%" width="300%" height="130%"><feGaussianBlur stdDeviation="1.7"/></filter></defs><g filter="url(#sh)" opacity="0.45" transform="translate(3.3,2.4)"><path d="M11.7 7.6V85" stroke="#000" stroke-width="4.2" stroke-linecap="round" fill="none"/><path d="M6 75.6L11.85 87L17.7 75.6" stroke="#000" stroke-width="4.2" stroke-linecap="round" stroke-linejoin="miter" stroke-miterlimit="10" fill="none"/></g><path d="M11.7 7.6V85" stroke="#fff" stroke-width="5.4" stroke-linecap="round" fill="none"/><path d="M6 75.6L11.85 87L17.7 75.6" stroke="#fff" stroke-width="5.4" stroke-linecap="round" stroke-linejoin="miter" stroke-miterlimit="10" fill="none"/><path d="M11.7 7.6V85" stroke="#de0a12" stroke-width="4.1" stroke-linecap="round" fill="none"/><path d="M6 75.6L11.85 87L17.7 75.6" stroke="#de0a12" stroke-width="4.1" stroke-linecap="round" stroke-linejoin="miter" stroke-miterlimit="10" fill="none"/><path d="M10.6 8V80" stroke="#f0545a" stroke-width="0.9" opacity="0.6"/></svg>
<div style="left:33px;top:473px;width:800px;height:1px;background:#ababab;"></div>
<div style="left:133px;top:473px;width:60px;height:25px;background:#fff;"></div>
<div style="left:133px;top:473px;width:1px;height:23px;background:#ababab;"></div>
<div style="left:192px;top:473px;width:1px;height:23px;background:#ababab;"></div>
<div style="left:133px;top:496px;width:60px;height:2px;background:#217346;"></div>
<span style="left:145.13px;top:479px;font-size:14px;color:#217346;letter-spacing:-1.473px;font-weight:bold;">Лист1</span>
<svg style="left:59.5px;top:483px" width="5" height="7" viewBox="0 0 5 7"><path d="M5 0V7L0 3.5Z" fill="#c2c2c2"/></svg>
<svg style="left:88.5px;top:483px" width="5" height="7" viewBox="0 0 5 7"><path d="M0 0V7L5 3.5Z" fill="#c2c2c2"/></svg>
<svg style="left:225px;top:478px" width="17" height="17" viewBox="0 0 17 17"><circle cx="8.5" cy="8.5" r="7.7" fill="none" stroke="#666" stroke-width="1.3"/><path d="M8.5 4.5V12.5M4.5 8.5H12.5" stroke="#666" stroke-width="1.6"/></svg>
<div style="left:524.7px;top:481.8px;width:1.8px;height:1.8px;background:#a2a2a2;"></div>
<div style="left:524.7px;top:485.5px;width:1.8px;height:1.8px;background:#a2a2a2;"></div>
<div style="left:524.7px;top:489.2px;width:1.8px;height:1.8px;background:#a2a2a2;"></div>
<div style="left:556px;top:480px;width:263px;height:15px;background:#d8d8d8;"></div>
<div style="left:542px;top:480px;width:15px;height:15px;background:#fff;border:1px solid #ababab;box-sizing:border-box;"></div>
<svg style="left:547px;top:484px" width="4.5" height="8" viewBox="0 0 4.5 8"><path d="M4.5 0V8L0 4Z" fill="#666"/></svg>
<div style="left:556px;top:480px;width:218px;height:15px;background:#fff;border:1px solid #ababab;box-sizing:border-box;"></div>
<div style="left:818px;top:480px;width:15px;height:15px;background:#fff;border:1px solid #ababab;box-sizing:border-box;"></div>
<svg style="left:824px;top:484px" width="4.5" height="8" viewBox="0 0 4.5 8"><path d="M0 0V8L4.5 4Z" fill="#666"/></svg>
<div style="left:33px;top:501px;width:821px;height:1px;background:#c9c9c9;"></div>
<div style="left:33px;top:502px;width:821px;height:21px;background:#f3f3f3;"></div>
<span style="left:40.88px;top:506px;font-size:11.5px;color:#555;letter-spacing:0.281px;">Готово</span>
<span style="left:262.82px;top:507px;font-size:11.5px;color:#555;letter-spacing:-0.267px;">Среднее: 153,955</span>
<span style="left:368.58px;top:507px;font-size:11.5px;color:#555;letter-spacing:-0.021px;">Количество: 4</span>
<span style="left:458.82px;top:507px;font-size:11.5px;color:#555;letter-spacing:-0.378px;">Сумма: 615,82</span>
<div style="left:551px;top:502px;width:38px;height:21px;background:#c6c6c6;"></div>
<svg style="left:563px;top:505px" width="13" height="13" viewBox="0 0 13 13"><rect x="0.5" y="0.5" width="12" height="12" fill="none" stroke="#707070"/><path d="M0.5 4.5H12.5M0.5 8.5H12.5M4.5 0.5V12.5M8.5 0.5V12.5" stroke="#707070" fill="none"/></svg>
<svg style="left:601px;top:505px" width="14" height="13" viewBox="0 0 14 13"><rect x="0.5" y="0.5" width="13" height="12" fill="none" stroke="#707070"/><rect x="3.5" y="2.5" width="7" height="8" fill="none" stroke="#707070"/><path d="M5.5 4.5H8.5M5.5 6.5H8.5M5.5 8.5H8.5" stroke="#707070"/></svg>
<svg style="left:639px;top:505px" width="14" height="13" viewBox="0 0 14 13"><rect x="0.5" y="0.5" width="13" height="12" fill="none" stroke="#707070"/><path d="M0.5 6.5H8.5V0.5M4.5 0.5V6.5" stroke="#707070" fill="none"/></svg>
<div style="left:669.5px;top:511.3px;width:7px;height:1.6px;background:#555;"></div>
<div style="left:680px;top:511.6px;width:101px;height:1px;background:#9a9a9a;"></div>
<div style="left:728px;top:506px;width:4px;height:11px;background:#555;"></div>
<div style="left:783.5px;top:511.3px;width:8.6px;height:1.6px;background:#555;"></div>
<div style="left:787px;top:507.8px;width:1.6px;height:8.6px;background:#555;"></div>
<span style="left:807.97px;top:507px;font-size:11.0px;color:#555;letter-spacing:-0.350px;">100%</span>
</body></html>
